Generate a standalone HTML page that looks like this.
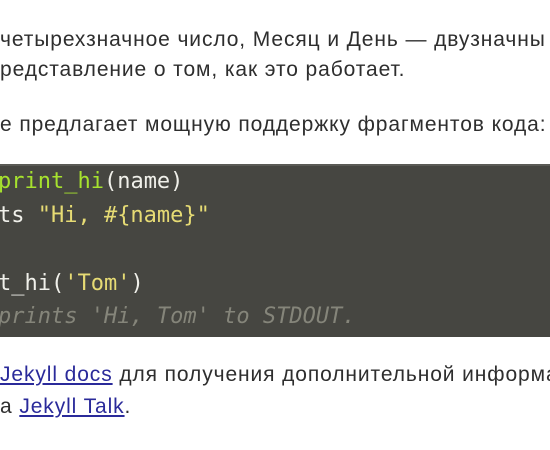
<!DOCTYPE html>
<html><head><meta charset="utf-8"><style>
html,body{margin:0;padding:0;background:#fff;width:550px;height:450px;overflow:hidden;position:relative}
.t{position:absolute;white-space:nowrap;font-family:"Liberation Sans","Noto Sans CJK SC",sans-serif;font-size:21px;color:#2e2e2e;letter-spacing:0.9px}
a{color:#2a2a9a;text-decoration:underline}
.code{position:absolute;left:0;top:164px;width:550px;height:171px;background:#464641;border-top:2px solid #5a5a55;overflow:hidden}
.c{position:absolute;white-space:pre;font-family:"DejaVu Sans Mono","Liberation Mono",monospace;font-size:22px;color:#f0f0ea;left:-55px}
.g{color:#a6e22e}.y{color:#e6db74}.cm{color:#85857a;font-style:italic}
</style></head><body>
<div class="t" style="left:0;top:28px">четырехзначное число, Месяц и День — двузначны</div>
<div class="t" style="left:0;top:58px">редставление о том, как это работает.</div>
<div class="t" style="left:0;top:113px">е предлагает мощную поддержку фрагментов кода:</div>
<div class="code">
<div class="c" style="top:3px">def <span class="g">print_hi</span>(name)</div>
<div class="c" style="top:37px">  puts <span class="y">"Hi, #{name}"</span></div>
<div class="c" style="top:105px">print_hi(<span class="y">'Tom'</span>)</div>
<div class="c cm" style="top:138px">#=> prints 'Hi, Tom' to STDOUT.</div>
</div>
<div class="t" style="left:0;top:363px"><a>Jekyll docs</a> для получения дополнительной информа</div>
<div class="t" style="left:0;top:395px">а <a>Jekyll Talk</a>.</div>
</body></html>
